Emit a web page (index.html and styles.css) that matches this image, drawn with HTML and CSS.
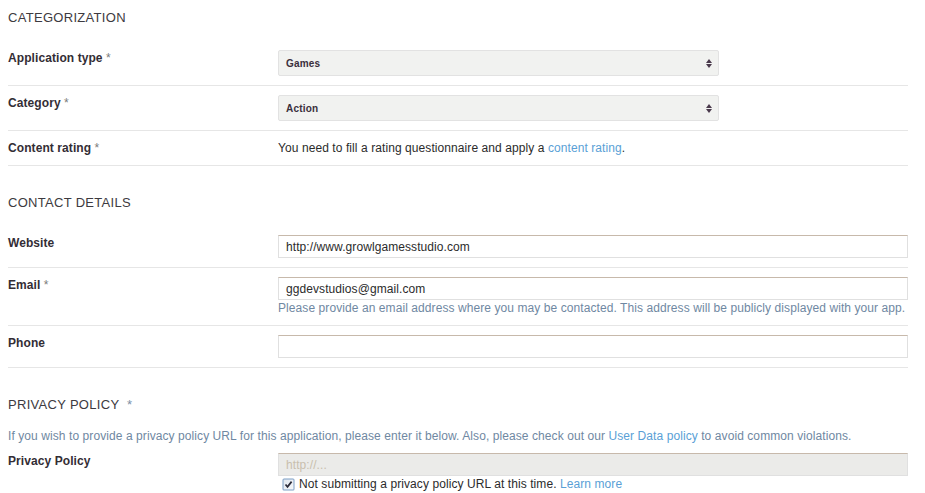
FILE: index.html
```html
<!DOCTYPE html>
<html lang="en">
<head>
<meta charset="utf-8">
<title>Store listing</title>
<link rel="stylesheet" href="styles.css">
</head>
<body>
<div class="page">
  <section class="section">
    <h2 class="section-title">CATEGORIZATION</h2>
    <div class="row">
      <div class="label">Application type <span class="req">*</span></div>
      <div class="control">
        <div class="select">
          <span class="select-value">Games</span>
          <svg class="select-arrow" width="6" height="9" viewBox="0 0 6 9"><path d="M3 0 L6 4 L0 4 Z M0 5 L6 5 L3 9 Z" fill="#4a3a4c"/></svg>
        </div>
      </div>
    </div>
    <div class="row">
      <div class="label">Category <span class="req">*</span></div>
      <div class="control">
        <div class="select">
          <span class="select-value">Action</span>
          <svg class="select-arrow" width="6" height="9" viewBox="0 0 6 9"><path d="M3 0 L6 4 L0 4 Z M0 5 L6 5 L3 9 Z" fill="#4a3a4c"/></svg>
        </div>
      </div>
    </div>
    <div class="row">
      <div class="label">Content rating <span class="req">*</span></div>
      <div class="control text">You need to fill a rating questionnaire and apply a <a class="link" href="#">content rating</a>.</div>
    </div>
  </section>

  <section class="section">
    <h2 class="section-title">CONTACT DETAILS</h2>
    <div class="row">
      <div class="label">Website</div>
      <div class="control"><div class="input">http://www.growlgamesstudio.com</div></div>
    </div>
    <div class="row">
      <div class="label">Email <span class="req">*</span></div>
      <div class="control">
        <div class="input">ggdevstudios@gmail.com</div>
        <div class="help">Please provide an email address where you may be contacted. This address will be publicly displayed with your app.</div>
      </div>
    </div>
    <div class="row">
      <div class="label">Phone</div>
      <div class="control"><div class="input"></div></div>
    </div>
  </section>

  <section class="section">
    <h2 class="section-title">PRIVACY POLICY <span class="req title-req">*</span></h2>
    <p class="intro">If you wish to provide a privacy policy URL for this application, please enter it below. Also, please check out our <a class="link" href="#">User Data policy</a> to avoid common violations.</p>
    <div class="row row-plain">
      <div class="label">Privacy Policy</div>
      <div class="control">
        <div class="input input-disabled">http://...</div>
        <div class="check-line">
          <svg class="checkbox" width="13" height="13" viewBox="0 0 13 13">
            <defs><linearGradient id="cb" x1="0" y1="0" x2="1" y2="1"><stop offset="0" stop-color="#dfe6ee"/><stop offset="1" stop-color="#f7f9fb"/></linearGradient></defs>
            <rect x="0.5" y="0.5" width="12" height="12" rx="1.5" fill="#7d9fc6"/>
            <rect x="1.5" y="1.5" width="10" height="10" fill="url(#cb)"/>
            <path d="M3.5 6.5 L5.5 8.8 L9.6 3.6" fill="none" stroke="#2c2c3a" stroke-width="1.7"/>
          </svg>
          <span>Not submitting a privacy policy URL at this time. <a class="link" href="#">Learn more</a></span>
        </div>
      </div>
    </div>
  </section>
</div>
</body>
</html>
```
FILE: styles.css
```css
html, body {
  margin: 0;
  padding: 0;
  background: #ffffff;
}

body {
  padding: 8px;
  font-family: "Liberation Sans", Arial, sans-serif;
  font-size: 12px;
  letter-spacing: 0.08px;
  color: #2b2b2b;
}

.page {
  width: 900px;
}

.section-title {
  margin: 27px 0 15px;
  padding-top: 1px;
  height: 17px;
  font-size: 13px;
  line-height: 18px;
  font-weight: normal;
  letter-spacing: 0.3px;
  color: #3d3a40;
}

.section:first-child .section-title {
  margin-top: 0;
}

.req {
  color: #7b7b7b;
  font-weight: normal;
}

.title-req {
  margin-left: 4px;
  color: #7b8fa6;
}

.row {
  display: grid;
  grid-template-columns: 270px 630px;
  padding: 9px 0;
  border-bottom: 1px solid #e6e6e6;
}

.row-plain {
  border-bottom: none;
  padding-bottom: 0;
}

.label {
  padding-top: 1px;
  font-weight: bold;
  font-size: 12px;
  line-height: 14px;
  color: #332d35;
}

.control {
  display: flex;
  flex-direction: column;
  align-items: flex-start;
}

.text {
  display: block;
  line-height: 16px;
  color: #2b2b2b;
}

.link {
  color: #5a9fd6;
  text-decoration: none;
}

.select {
  position: relative;
  box-sizing: border-box;
  width: 441px;
  height: 26px;
  display: flex;
  align-items: center;
  padding: 0 7px;
  background: #f1f2f0;
  border: 1px solid #e2e2e2;
  border-radius: 2px;
  font-size: 10px;
  font-weight: bold;
  letter-spacing: 0.2px;
  color: #3a2f3c;
}

.select-arrow {
  position: absolute;
  right: 6px;
  top: 8px;
}

.input {
  box-sizing: border-box;
  width: 630px;
  height: 23px;
  padding: 0 7px;
  display: flex;
  align-items: center;
  background: #ffffff;
  border: 1px solid #e0e0e0;
  border-top-color: #c7b9ab;
  font-size: 12px;
  color: #2b2b2b;
}

.input-disabled {
  background: #ebebe9;
  color: #c9bfae;
}

.help {
  line-height: 16px;
  color: #6f88a2;
}

.intro {
  margin: 0;
  line-height: 16px;
  color: #6f88a2;
}

.check-line {
  display: flex;
  align-items: center;
  gap: 4px;
  height: 16px;
  padding-left: 4px;
  line-height: 16px;
  color: #2b2b2b;
}

.checkbox {
  display: block;
}
```
